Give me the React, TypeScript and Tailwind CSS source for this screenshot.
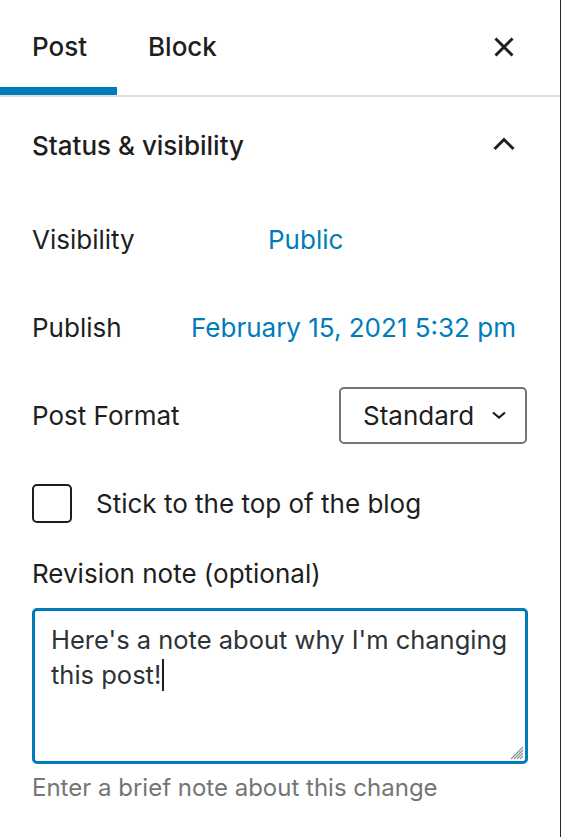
import type { ReactNode } from "react";

const FONT = { fontFamily: "Inter, 'Noto Sans', sans-serif" };

function Row({ children }: { children: ReactNode }) {
  return <div className="flex h-[88px] items-center">{children}</div>;
}

export default function App() {
  return (
    <div
      className="w-[561px] h-[837px] bg-white text-[#1e1e1e] border-r border-[#2a2833] overflow-hidden"
      style={FONT}
    >
      {/* Tabs */}
      <div className="flex h-[97px] items-stretch border-b-2 border-[#e0e0e0]">
        <div className="w-[117px] pl-8 flex items-center text-[26px] font-medium shadow-[inset_0_-8px_0_#007cba] pb-[2px]">
          Post
        </div>
        <div className="pl-[31px] flex items-center text-[26px] font-medium pb-[2px]">
          Block
        </div>
        <div className="ml-auto mr-[44px] flex items-center pb-[2px]">
          <svg width="24" height="24" viewBox="0 0 24 24" fill="none">
            <path
              d="M3.5 3.5 L20.5 20.5 M20.5 3.5 L3.5 20.5"
              stroke="#1e1e1e"
              strokeWidth="3"
            />
          </svg>
        </div>
      </div>

      {/* Panel */}
      <div className="px-8">
        <div className="flex h-[98px] items-center justify-between">
          <span className="text-[26px] font-medium -mt-[2px]">Status &amp; visibility</span>
          <svg width="24" height="24" viewBox="0 0 24 24" fill="none" className="mr-[12px] -mt-[4px]">
            <path d="M2.5 17 L12 7.5 L21.5 17" stroke="#1e1e1e" strokeWidth="3" />
          </svg>
        </div>

        <Row>
          <span className="w-[236px] text-[26px]">Visibility</span>
          <span className="text-[26px] text-[#007cba]">Public</span>
        </Row>
        <Row>
          <span className="text-[26px]">Publish</span>
          <span className="ml-auto mr-[12px] text-[26px] text-[#007cba]">
            February 15, 2021 5:32 pm
          </span>
        </Row>
        <Row>
          <span className="text-[26px]">Post Format</span>
          <div className="ml-auto mr-[1px] w-[188px] h-[57px] border-2 border-[#757575] rounded-[5px] flex items-center pl-[22px] pr-[18px]">
            <span className="text-[26px]">Standard</span>
            <svg width="16" height="10" viewBox="0 0 16 10" fill="none" className="ml-auto">
              <path d="M2 2.5 L8 7.5 L14 2.5" stroke="#1e1e1e" strokeWidth="2.2" />
            </svg>
          </div>
        </Row>
        <Row>
          <div className="w-[40px] h-[39px] border-2 border-[#1e1e1e] rounded-[5px]" />
          <span className="ml-[24px] text-[26px]">Stick to the top of the blog</span>
        </Row>

        <div className="mt-[9px] text-[26px] leading-[36px]">Revision note (optional)</div>
        <div className="mt-4 relative h-[156px] border-[3px] border-[#007cba] rounded-[5px] pl-4 pr-2 pt-[11px] text-[25.5px] leading-[35px] text-[#2c3338] whitespace-nowrap">
          Here's a note about why I'm changing
          <br />
          this post!
          <span className="inline-block w-[2px] h-[32px] bg-[#1e1e1e] align-[-7px] ml-[1px]" />
          <svg
            width="16"
            height="16"
            viewBox="0 0 16 16"
            className="absolute right-[1px] bottom-[1px]"
            fill="none"
          >
            <path
              d="M15 3 L3 15 M15 6 L6 15 M15 9 L9 15 M15 12 L12 15"
              stroke="#8c8f94"
              strokeWidth="1.1"
            />
          </svg>
        </div>
        <div className="mt-2 text-[24px] leading-[32px] text-[#757575]">
          Enter a brief note about this change
        </div>
      </div>
    </div>
  );
}
